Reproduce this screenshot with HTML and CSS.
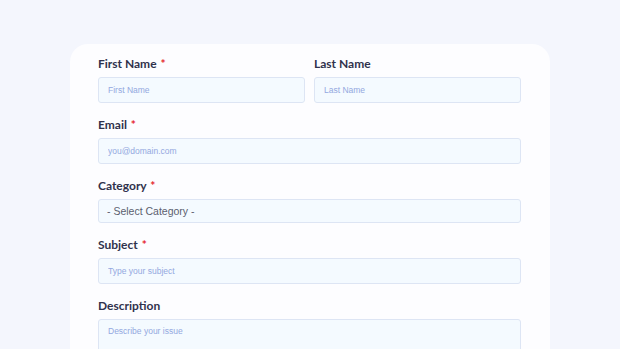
FILE: index.html
```html
<!DOCTYPE html>
<html>
<head>
<meta charset="utf-8">
<link rel="stylesheet" href="styles.css">
</head>
<body>
<div class="page">
  <form class="card">
    <div class="row">
      <div class="field">
        <label class="label">First Name <span class="req">*</span></label>
        <input class="input" type="text" placeholder="First Name">
      </div>
      <div class="field">
        <label class="label">Last Name</label>
        <input class="input" type="text" placeholder="Last Name">
      </div>
    </div>
    <div class="field">
      <label class="label">Email <span class="req">*</span></label>
      <input class="input" type="text" placeholder="you@domain.com">
    </div>
    <div class="field">
      <label class="label">Category <span class="req">*</span></label>
      <div class="select">- Select Category -</div>
    </div>
    <div class="field">
      <label class="label">Subject <span class="req">*</span></label>
      <input class="input" type="text" placeholder="Type your subject">
    </div>
    <div class="field">
      <label class="label">Description</label>
      <textarea class="textarea" placeholder="Describe your issue"></textarea>
    </div>
  </form>
</div>
</body>
</html>
```
FILE: styles.css
```css
* { box-sizing: border-box; }
html, body { margin: 0; padding: 0; }
body {
  width: 620px;
  height: 349px;
  overflow: hidden;
  background: #f4f6fd;
  font-family: "Lato", "Liberation Sans", sans-serif;
}
.page {
  padding: 44px 70px 0 70px;
}
.card {
  background: #fdfdff;
  border-radius: 18px 18px 0 0;
  padding: 12px 29px 0 28px;
  display: flex;
  flex-direction: column;
  gap: 14px;
  height: 305px;
  overflow: hidden;
}
.row {
  display: grid;
  grid-template-columns: 1fr 1fr;
  column-gap: 9px;
}
.field {
  display: flex;
  flex-direction: column;
  flex-shrink: 0;
}
.label {
  font-size: 12px;
  line-height: 16px;
  font-weight: 700;
  color: #30324c;
  margin-bottom: 5px;
}
.req {
  color: #e5262e;
  margin-left: 1px;
}
.input, .select, .textarea {
  height: 26px;
  border: 1px solid #dde5f4;
  border-radius: 3px;
  background: #f4faff;
  padding: 0 9px;
  font-family: "Liberation Sans", sans-serif;
  font-size: 8.5px;
  color: #333;
  outline: none;
  width: 100%;
  margin: 0;
}
.input::placeholder, .textarea::placeholder {
  color: #93a8e0;
}
.select {
  height: 24px;
  display: flex;
  align-items: center;
  font-size: 10.5px;
  color: #5b5e6e;
  padding-left: 8px;
}
.textarea {
  height: 60px;
  padding-top: 6px;
  resize: none;
}
```
